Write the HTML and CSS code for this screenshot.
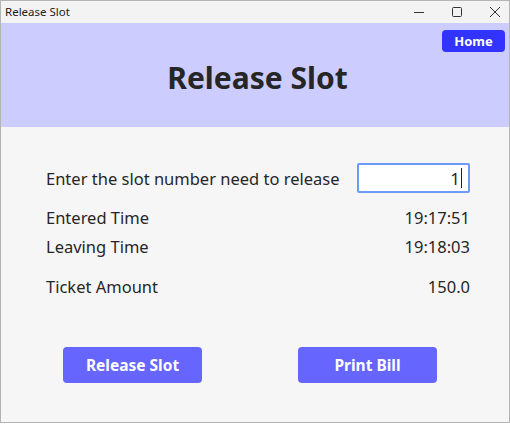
FILE: index.html
```html
<!DOCTYPE html>
<html>
<head>
<meta charset="utf-8">
<link rel="stylesheet" href="styles.css">
</head>
<body>
<div class="window">
  <div class="titlebar">
    <span class="title">Release Slot</span>
    <div class="controls">
      <span class="ctl"><svg width="12" height="12" viewBox="0 0 12 12"><path d="M1 6.5h10" stroke="#333" stroke-width="1"/></svg></span>
      <span class="ctl"><svg width="12" height="12" viewBox="0 0 12 12"><rect x="1.5" y="1.5" width="9" height="9" rx="1" fill="none" stroke="#333" stroke-width="1"/></svg></span>
      <span class="ctl"><svg width="12" height="12" viewBox="0 0 12 12"><path d="M1 1l10 10M11 1L1 11" stroke="#333" stroke-width="1"/></svg></span>
    </div>
  </div>
  <div class="header">
    <div class="home-row"><button class="home">Home</button></div>
    <h1 class="heading">Release Slot</h1>
  </div>
  <div class="content">
    <div class="row first">
      <span class="label">Enter the slot number need to release</span>
      <div class="input"><span>1</span><span class="caret"></span></div>
    </div>
    <div class="row r2">
      <span class="label">Entered Time</span>
      <span class="value">19:17:51</span>
    </div>
    <div class="row r3">
      <span class="label">Leaving Time</span>
      <span class="value">19:18:03</span>
    </div>
    <div class="row r4">
      <span class="label">Ticket Amount</span>
      <span class="value">150.0</span>
    </div>
    <div class="buttons">
      <button class="action a1">Release Slot</button>
      <button class="action a2">Print Bill</button>
    </div>
  </div>
</div>
</body>
</html>
```

FILE: styles.css
```css
html, body {
  margin: 0;
  padding: 0;
  background: #ffffff;
}
.window {
  width: 508px;
  height: 422px;
  border: 1px solid #b4b4b4;
  border-top: none;
  background: #f6f6f6;
  display: flex;
  flex-direction: column;
  font-family: "Noto Sans", "Open Sans", sans-serif;
}
.titlebar {
  height: 22px;
  background: #f3f3f3;
  display: flex;
  align-items: center;
  justify-content: space-between;
  border-top: 1px solid #b4b4b4;
}
.title {
  font-size: 11.5px;
  color: #222;
  padding-left: 4px;
  line-height: 1;
}
.controls {
  display: flex;
  padding-right: 8px;
  gap: 26px;
}
.ctl {
  width: 12px;
  height: 12px;
  display: flex;
}
.header {
  background: #ccccff;
  height: 104px;
  display: flex;
  flex-direction: column;
}
.home-row {
  display: flex;
  justify-content: flex-end;
  padding: 7px 4px 0 0;
}
.home {
  width: 63px;
  height: 22px;
  background: #3333ff;
  color: #fff;
  border: none;
  border-radius: 4px;
  font-family: "Noto Sans", sans-serif;
  font-weight: bold;
  font-size: 13px;
  padding: 0;
}
.heading {
  margin: 6px 0 0 0;
  text-align: center;
  font-size: 30px;
  font-weight: bold;
  color: #262626;
  line-height: 40px;
  padding-left: 5px;
}
.content {
  flex: 1;
  padding: 0 39px 0 45px;
  display: flex;
  flex-direction: column;
}
.row {
  display: flex;
  justify-content: space-between;
  align-items: center;
  font-size: 16.5px;
  color: #262626;
}
.row.first {
  margin-top: 36px;
  height: 30px;
}
.row.r2 {
  margin-top: 13px;
  height: 22px;
}
.row.r3 {
  margin-top: 7px;
  height: 22px;
}
.row.r4 {
  margin-top: 18px;
  height: 22px;
}
.input {
  border: 2px solid #6b9bf7;
  border-radius: 2px;
  background: #fff;
  display: flex;
  align-items: center;
  justify-content: flex-end;
  padding-right: 6px;
  box-sizing: border-box;
  width: 113px;
  height: 30px;
  font-size: 17px;
}
.caret {
  width: 1px;
  height: 20px;
  background: #222;
  margin-left: 1px;
}
.buttons {
  display: flex;
  margin-top: 50px;
  padding-left: 17px;
  gap: 96px;
}
.action {
  width: 139px;
  height: 36px;
  background: #6666ff;
  color: #fff;
  border: none;
  border-radius: 4px;
  font-family: "Noto Sans", sans-serif;
  font-weight: bold;
  font-size: 15.5px;
  padding: 0;
}
```
